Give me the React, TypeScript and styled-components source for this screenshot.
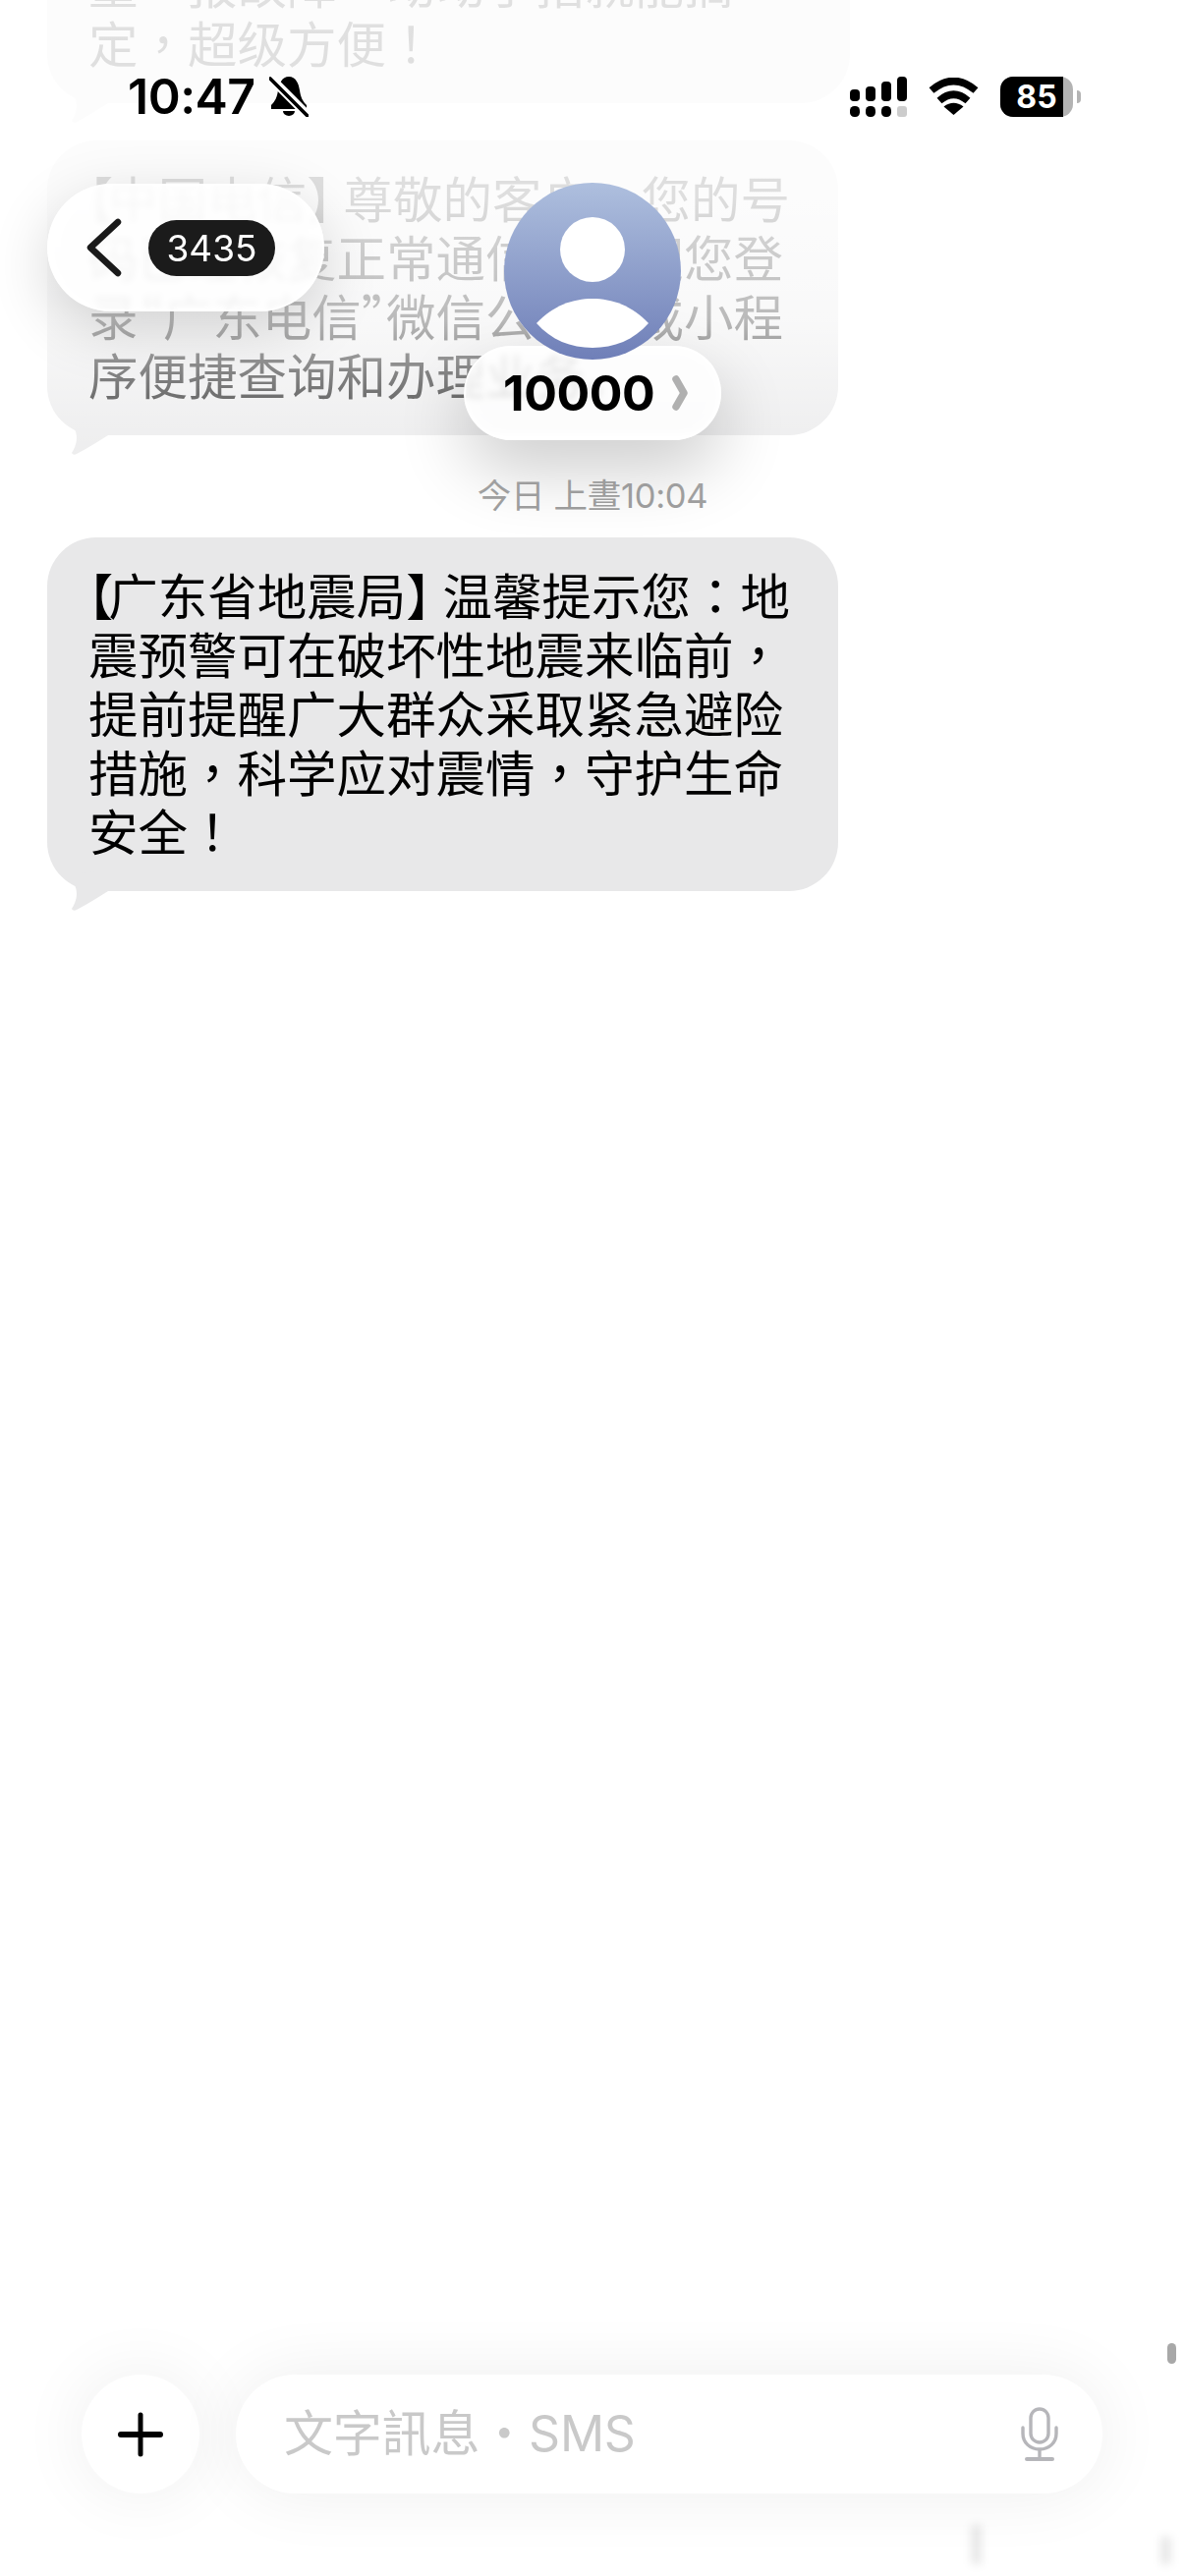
import React from "react";
import styled, { createGlobalStyle } from "styled-components";

const CJK = `Inter, "Noto Sans CJK SC", sans-serif`;

const Global = createGlobalStyle`
  html, body { margin: 0; padding: 0; background: #ffffff; }
  * { box-sizing: border-box; }
`;

const Screen = styled.div`
  position: relative;
  width: 1206px;
  height: 2622px;
  overflow: hidden;
  display: flex;
  flex-direction: column;
  background: #ffffff;
  font-family: ${CJK};
`;

const MessageList = styled.div`
  flex: 1;
  display: flex;
  flex-direction: column;
  align-items: flex-start;
  margin-top: -75px;
  padding-left: 48px;
`;

const Bubble = styled.div<{ $width: number; $gap?: number }>`
  position: relative;
  width: ${(p) => p.$width}px;
  margin-top: ${(p) => p.$gap ?? 0}px;
  padding: 27px 20px 33px 42px;
  border-radius: 50px;
  background: #e8e8e9;
  color: #000000;
  font-family: "Noto Sans CJK SC", sans-serif;
  font-size: 50.5px;
  line-height: 60px;
  white-space: nowrap;
`;

const Tail = styled.svg`
  position: absolute;
  left: 18px;
  bottom: -21px;
  width: 50px;
  height: 42px;
`;

const DateLabel = styled.div`
  align-self: center;
  margin: 42px 0 22px -48px;
  color: #999999;
  font-size: 34.5px;
  line-height: 40px;
  letter-spacing: -0.3px;
  font-family: ${CJK};
`;

const TopFade = styled.div`
  position: absolute;
  top: 0;
  left: 0;
  right: 0;
  height: 540px;
  pointer-events: none;
  background: linear-gradient(
    180deg,
    rgba(255, 255, 255, 0.88) 0,
    rgba(255, 255, 255, 0.87) 200px,
    rgba(255, 255, 255, 0.8) 260px,
    rgba(255, 255, 255, 0.73) 325px,
    rgba(255, 255, 255, 0.5) 385px,
    rgba(255, 255, 255, 0.3) 443px,
    rgba(255, 255, 255, 0) 540px
  );
`;

const StatusBar = styled.div`
  position: absolute;
  top: 68px;
  left: 130px;
  right: 106px;
  height: 60px;
  display: flex;
  align-items: center;
  justify-content: space-between;
`;

const StatusGroup = styled.div<{ $gap: number }>`
  display: flex;
  align-items: center;
  gap: ${(p) => p.$gap}px;
`;

const Clock = styled.span`
  color: #000000;
  font-size: 50px;
  font-weight: 600;
  line-height: 60px;
  letter-spacing: -0.5px;
`;

const Battery = styled.div`
  position: relative;
  width: 74px;
  height: 41px;
  margin-right: 8px;
  border-radius: 13px;
  background: #b3b3b3;
  display: flex;
  align-items: center;
  justify-content: center;
`;

const BatteryFill = styled.div`
  position: absolute;
  inset: 0 auto 0 0;
  border-radius: 13px 0 0 13px;
  background: #000000;
`;

const BatteryText = styled.span`
  position: relative;
  color: #ffffff;
  font-size: 32px;
  font-weight: 700;
  line-height: 41px;
`;

const BatteryNib = styled.div`
  position: absolute;
  right: -8px;
  top: 14px;
  width: 4px;
  height: 13px;
  border-radius: 0 4px 4px 0;
  background: #b3b3b3;
`;

const GlassPill = styled.div`
  background: rgba(255, 255, 255, 0.8);
  backdrop-filter: blur(3px);
  border: 2px solid rgba(255, 255, 255, 0.9);
  box-shadow: 0 18px 60px rgba(0, 0, 0, 0.16), inset 0 0 12px rgba(255, 255, 255, 0.95);
`;

const BackButton = styled(GlassPill)`
  position: absolute;
  top: 187px;
  left: 48px;
  width: 282px;
  height: 130px;
  padding-left: 38px;
  border-radius: 65px;
  display: flex;
  align-items: center;
  gap: 27px;
`;

const CountBadge = styled.span`
  width: 129px;
  height: 57px;
  border-radius: 29px;
  background: #1b1b1b;
  color: #ffffff;
  font-size: 37px;
  line-height: 57px;
  text-align: center;
`;

const Contact = styled.div`
  position: absolute;
  top: 186px;
  left: 0;
  right: 0;
  display: flex;
  flex-direction: column;
  align-items: center;
`;

const Avatar = styled.svg`
  position: relative;
  z-index: 1;
  width: 180px;
  height: 180px;
`;

const NamePill = styled(GlassPill)`
  width: 262px;
  height: 96px;
  margin-top: -14px;
  padding-left: 38px;
  border-radius: 48px;
  display: flex;
  align-items: center;
  gap: 18px;
  box-shadow: 0 30px 70px rgba(0, 0, 0, 0.2), inset 0 0 12px rgba(255, 255, 255, 0.95);
`;

const ContactName = styled.span`
  color: #000000;
  font-size: 50px;
  font-weight: 700;
  line-height: 60px;
  letter-spacing: -0.4px;
`;

const Composer = styled.div`
  display: flex;
  align-items: center;
  gap: 37px;
  margin: 0 0 84px 83px;
`;

const PlusButton = styled.div`
  width: 120px;
  height: 121px;
  border-radius: 50%;
  background: #ffffff;
  box-shadow: 0 0 70px rgba(0, 0, 0, 0.07);
  display: flex;
  align-items: center;
  justify-content: center;
`;

const InputField = styled.div`
  width: 882px;
  height: 121px;
  padding: 0 44px 0 49px;
  border-radius: 60px;
  background: #ffffff;
  box-shadow: 0 0 70px rgba(0, 0, 0, 0.07);
  display: flex;
  align-items: center;
  justify-content: space-between;
`;

const Placeholder = styled.span`
  color: #c9c9c9;
  font-size: 50px;
  line-height: 60px;
  margin-top: -2px;
  letter-spacing: -0.2px;
  font-family: ${CJK};
`;

const ScrollThumb = styled.div`
  position: absolute;
  top: 2385px;
  right: 9px;
  width: 9px;
  height: 21px;
  border-radius: 5px;
  background: #a8a8a8;
`;

const Smudge = styled.div<{ $left: number; $top: number; $height: number }>`
  position: absolute;
  left: ${(p) => p.$left}px;
  top: ${(p) => p.$top}px;
  width: 11px;
  height: ${(p) => p.$height}px;
  background: rgba(0, 0, 0, 0.09);
  filter: blur(4px);
`;

const Line = styled.span`
  display: block;
`;

/* Centred comma, colon and exclamation mark, as the traditional-Chinese cut draws them */
const CentredMark = styled.span`
  font-family: "Noto Sans CJK TC", sans-serif;
`;

/* Half-width brackets and quotes, with a side adjustment for each */
const TightMark = styled.span<{ $after: number }>`
  font-feature-settings: "halt";
  margin-right: ${(p) => p.$after}px;
`;

const tightAfter: Record<string, number> = { "【": -5, "】": 12, "“": 0, "”": 0 };

function Rich({ text }: { text: string }) {
  const parts = text.split(/([【】“”，、：！])/);
  return (
    <>
      {parts.map((part, i) => {
        if (part in tightAfter) return <TightMark key={i} $after={tightAfter[part]}>{part}</TightMark>;
        if (/^[，、：！]$/.test(part)) return <CentredMark key={i}>{part}</CentredMark>;
        return <React.Fragment key={i}>{part}</React.Fragment>;
      })}
    </>
  );
}

function Lines({ items }: { items: string[] }) {
  return (
    <>
      {items.map((t) => (
        <Line key={t}>
          <Rich text={t} />
        </Line>
      ))}
    </>
  );
}

const BubbleTail = () => (
  <Tail viewBox="0 0 50 42">
    <path d="M3 4 C8 10 12 16 12 24 C12 30 9 36 7 39 C8 41 10 41 12 40 C24 34 34 27 44 21 L44 0 Z" fill="#e8e8e9" />
  </Tail>
);

const Signal = () => (
  <svg width="58" height="41" viewBox="0 0 58 41">
    <rect x="0" y="13" width="10" height="12" rx="4" />
    <rect x="16" y="10" width="10" height="15" rx="4" />
    <rect x="32" y="5" width="10" height="20" rx="4" />
    <rect x="48" y="0" width="10" height="25" rx="4" />
    <rect x="0" y="30" width="10" height="11" rx="4.5" />
    <rect x="16" y="30" width="10" height="11" rx="4.5" />
    <rect x="32" y="30" width="10" height="11" rx="4.5" />
    <rect x="48" y="30" width="10" height="11" rx="3" fill="#cccccc" />
  </svg>
);

const Wifi = () => (
  <svg width="51" height="38" viewBox="0 0 51 38">
    <path d="M3 13 Q25.5 -6 48 13" fill="none" stroke="#000" strokeWidth="7.5" />
    <path d="M11 23.5 Q25.5 11 40 23.5" fill="none" stroke="#000" strokeWidth="7.5" />
    <path d="M25.5 38 L15.5 29.5 Q25.5 22 35.5 29.5 Z" />
  </svg>
);

const BellSlash = () => (
  <svg width="40" height="42" viewBox="0 0 40 42">
    <path d="M20 1 C27 1 30 8 31 15 C32 22 34 26 38 30 L38 34 L2 34 L2 30 C6 26 8 22 9 15 C10 8 13 1 20 1 Z" />
    <path d="M14 36 A6 5 0 0 0 26 36 Z" />
    <path d="M1 2 L40 41" stroke="#fff" strokeWidth="9" />
    <path d="M1 3 L39 41" stroke="#000" strokeWidth="3.6" strokeLinecap="round" />
  </svg>
);

const Mic = () => (
  <svg width="40" height="56" viewBox="0 0 40 56" fill="none" stroke="#b6b6ba" strokeWidth="3.4">
    <rect x="11" y="2" width="18" height="34" rx="9" />
    <path d="M3 21 V27 C3 36 10 43 20 43 C30 43 37 36 37 27 V21" strokeLinecap="round" />
    <path d="M20 43 V53" />
    <path d="M7 53 H33" strokeWidth="4" strokeLinecap="round" />
  </svg>
);

export default function App() {
  const batteryLevel = 86;
  return (
    <Screen>
      <Global />
      <MessageList>
        <Bubble $width={817}>
          <Lines items={["量、报故障、动动手指就能搞", "定，超级方便！"]} />
          <BubbleTail />
        </Bubble>
        <Bubble $width={805} $gap={38}>
          <Lines
            items={[
              "【中国电信】尊敬的客户，您的号",
              "码已经恢复正常通信，欢迎您登",
              "录“广东电信”微信公众号或小程",
              "序便捷查询和办理业务。",
            ]}
          />
          <BubbleTail />
        </Bubble>
        <DateLabel>今日 上晝10:04</DateLabel>
        <Bubble $width={805}>
          <Lines
            items={[
              "【广东省地震局】温馨提示您：地",
              "震预警可在破坏性地震来临前，",
              "提前提醒广大群众采取紧急避险",
              "措施，科学应对震情，守护生命",
              "安全！",
            ]}
          />
          <BubbleTail />
        </Bubble>
      </MessageList>

      <Composer>
        <PlusButton>
          <svg width="46" height="46" viewBox="0 0 46 46" stroke="#000" strokeLinecap="round">
            <path d="M3 23 H43" strokeWidth="6" />
            <path d="M23 3 V43" strokeWidth="5" />
          </svg>
        </PlusButton>
        <InputField>
          <Placeholder>文字訊息・SMS</Placeholder>
          <Mic />
        </InputField>
      </Composer>

      <TopFade />

      <StatusBar>
        <StatusGroup $gap={14}>
          <Clock>10:47</Clock>
          <BellSlash />
        </StatusGroup>
        <StatusGroup $gap={22}>
          <Signal />
          <Wifi />
          <Battery>
            <BatteryFill style={{ width: `${batteryLevel}%` }} />
            <BatteryText>85</BatteryText>
            <BatteryNib />
          </Battery>
        </StatusGroup>
      </StatusBar>

      <BackButton>
        <svg width="36" height="60" viewBox="0 0 36 60" fill="none" stroke="#1a1a1a" strokeWidth="6.5" strokeLinecap="round" strokeLinejoin="round">
          <path d="M32 4 L4 30 L32 56" />
        </svg>
        <CountBadge>3435</CountBadge>
      </BackButton>

      <Contact>
        <Avatar viewBox="0 0 180 180">
          <defs>
            <linearGradient id="avatarFill" x1="0" y1="0" x2="0" y2="1">
              <stop offset="0" stopColor="#aebfde" />
              <stop offset="1" stopColor="#6f7fb8" />
            </linearGradient>
          </defs>
          <circle cx="90" cy="90" r="90" fill="url(#avatarFill)" />
          <circle cx="90" cy="68" r="33" fill="#fff" />
          <path d="M33 143 C50 125 70 118 90 118 C110 118 130 125 147 143 C132 160 112 168 90 168 C68 168 48 160 33 143 Z" fill="#fff" />
        </Avatar>
        <NamePill>
          <ContactName>10000</ContactName>
          <svg width="16" height="36" viewBox="0 0 16 36" fill="none" stroke="#b0b0b0" strokeWidth="7.5" strokeLinecap="round" strokeLinejoin="round">
            <path d="M4 4 L12 18 L4 32" />
          </svg>
        </NamePill>
      </Contact>

      <ScrollThumb />
      <Smudge $left={988} $top={2570} $height={40} />
      <Smudge $left={1181} $top={2582} $height={28} />
    </Screen>
  );
}
